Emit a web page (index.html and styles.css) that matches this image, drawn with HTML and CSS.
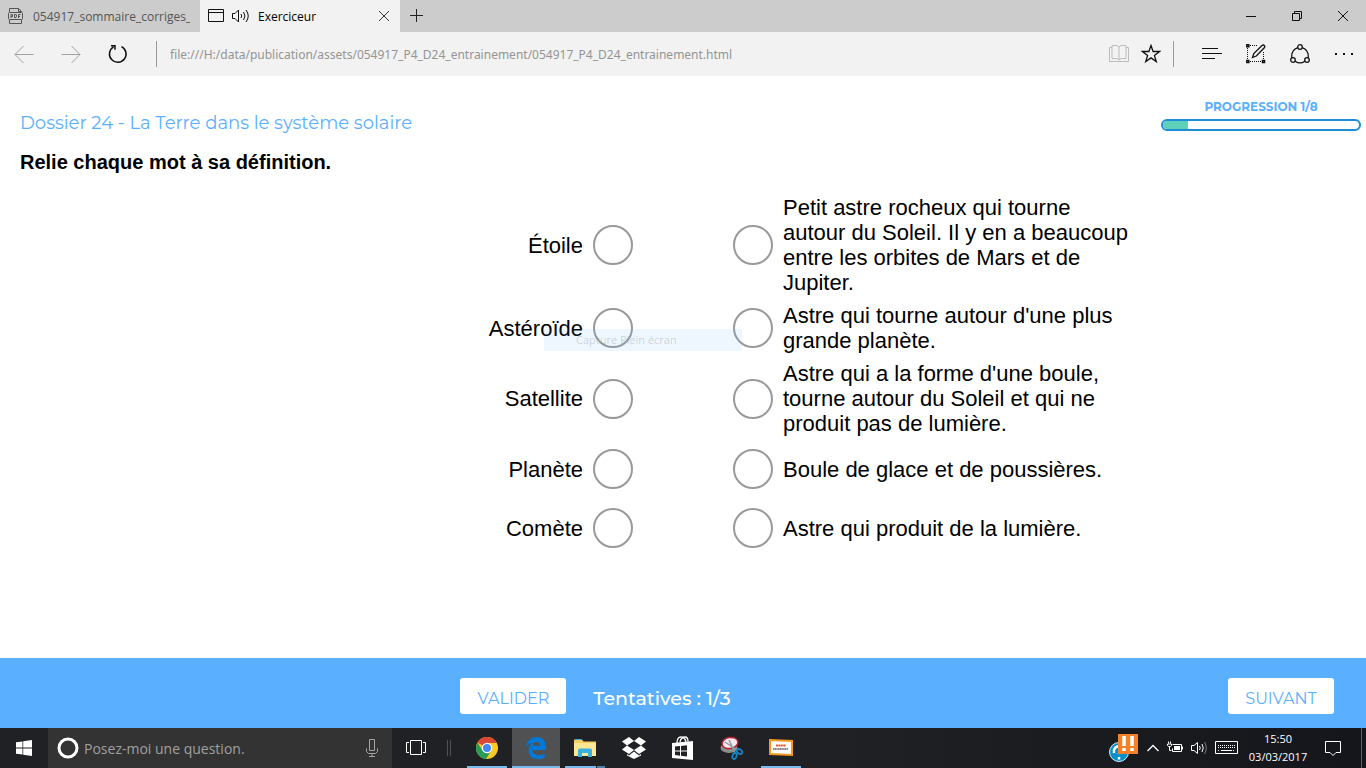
FILE: index.html
```html
<!DOCTYPE html>
<html lang="fr">
<head>
  <meta charset="UTF-8" />
  <meta name="viewport" content="width=device-width, initial-scale=1" />
  <title>Exerciceur</title>
  <link rel="stylesheet" href="styles.css">
</head>
<body>
  <header class="browser">
    <div class="tabs">
      <button class="tab">
        <svg width="16" height="18" viewBox="0 0 16 18" fill="none" stroke="#555"><path d="M1.500 5V1.500h9l3 3V5M10.500 1.500v3h3M1.500 13v3.500h12V13"/><rect x=".5" y="5.500" width="14" height="7" rx="1"/><path d="M3 11V7.500h1.500v2H3M6.500 7.500v3H8l.5-1V8L8 7.500H6.500M10.500 11V7.500h2M10.500 9.500H12"/></svg>
        <span class="tab-title">054917_sommaire_corriges_</span>
      </button>
      <div class="tab active">
        <svg width="16" height="14" viewBox="0 0 16 14" fill="none" stroke="#111"><path d="M.5.5h15v12H.5zM.5 3.500h15"/></svg>
        <svg class="sound" width="17" height="14" viewBox="0 0 17 14" fill="none" stroke="#111"><path d="M.5 4.500h2.500L6.500 1v12L3 9.500H.5zM9 5q1.500 2 0 4M11.500 3q3 4 0 8M14 1q4.500 6 0 12"/></svg>
        <span class="tab-title">Exerciceur</span>
        <button class="close" aria-label="Fermer l'onglet"><svg width="12" height="12" viewBox="0 0 12 12" stroke="#333"><path d="M1 1l10 10M11 1L1 11"/></svg></button>
      </div>
      <button class="new-tab" aria-label="Nouvel onglet"><svg width="14" height="14" viewBox="0 0 14 14" stroke="#222"><path d="M6.500 0v13M0 6.500h13"/></svg></button>
      <div class="window-buttons">
        <button aria-label="Réduire"><svg width="12" height="12" viewBox="0 0 12 12" stroke="#111"><path d="M1 6.500h10"/></svg></button>
        <button aria-label="Restaurer"><svg width="12" height="12" viewBox="0 0 12 12" fill="none" stroke="#111"><path d="M1.500 3.500h7v7h-7zM3.500 3.500v-2h7v7h-2"/></svg></button>
        <button aria-label="Fermer"><svg width="12" height="12" viewBox="0 0 12 12" stroke="#111"><path d="M1 1l10 10M11 1L1 11"/></svg></button>
      </div>
    </div>

    <div class="toolbar">
      <button aria-label="Précédent"><svg width="20" height="18" viewBox="0 0 20 18" fill="none" stroke="#a0a0a0"><path d="M19.500 9.500H1M9.500 1L1 9.500 9.500 18"/></svg></button>
      <button aria-label="Suivant"><svg width="20" height="18" viewBox="0 0 20 18" fill="none" stroke="#a0a0a0"><path d="M.5 9.500H19M10.500 1L19 9.500 10.500 18"/></svg></button>
      <button aria-label="Actualiser"><svg width="20" height="20" viewBox="0 0 20 20" fill="none" stroke="#111" stroke-width="1.500"><path d="M13.500 2.600a8.300 8.300 0 1 1-8 .3M3 1.700h4v4"/></svg></button>
      <input class="address" type="text" aria-label="Adresse" value="file:///H:/data/publication/assets/054917_P4_D24_entrainement/054917_P4_D24_entrainement.html">
      <div class="page-tools">
        <button aria-label="Mode lecture"><svg width="20" height="20" viewBox="0 0 20 20" fill="none" stroke="#bcbcbc"><path d="M3 1.500h5l2 1.500 2-1.500h5v13h-5l-2 1.500-2-1.500H3zM10 3v13M3 3.500H.5v14h19v-14H17M8 17.500h4"/></svg></button>
        <button aria-label="Favoris"><svg width="20" height="20" viewBox="0 0 20 20" fill="none" stroke="#111" stroke-width="1.300"><path d="M10 1.500l2.100 6h6.400l-5.100 3.900 1.900 6.200-5.300-3.700-5.300 3.700 1.900-6.200L1.500 7.500h6.400z"/></svg></button>
      </div>
      <div class="hub-tools">
        <button aria-label="Hub"><svg width="20" height="20" viewBox="0 0 20 20" stroke="#111"><path d="M0 4.500h16M0 9.500h20M0 14.500h13"/></svg></button>
        <button aria-label="Créer une note web"><svg width="20" height="20" viewBox="0 0 20 20" fill="none" stroke="#111"><path d="M4 1.500h8M1.500 4v12M4 17.500h12M17.500 8v8" stroke-dasharray="1 1"/><path d="M.8.800h2v2h-2zM.8 16.500h2v2h-2zM16.500 16.500h2v2h-2z" stroke-width="1.500"/><path d="M6.500 13.500l1.300-4 8.200-8q1.300-1 2.300 0t0 2.300L10.300 12z" stroke-width="1.300"/></svg></button>
        <button aria-label="Partager"><svg width="20" height="20" viewBox="0 0 20 20" fill="none" stroke="#111" stroke-width="1.300"><circle cx="10" cy="3" r="2.300"/><circle cx="3" cy="16" r="2.300"/><circle cx="17" cy="16" r="2.300"/><path d="M7.700 3.600Q1 6 1.800 13.800M12.300 3.600Q19 6 18.200 13.800M5.200 17.200q4.800 3.500 9.600 0"/></svg></button>
        <button aria-label="Autres actions"><svg width="20" height="20" viewBox="0 0 20 20" fill="#111"><path d="M1 9h2v2H1zM9 9h2v2H9zM17 9h2v2h-2z"/></svg></button>
      </div>
    </div>
  </header>

  <main class="exercise">
    <div class="heading">
      <div>
        <h1>Dossier 24 - La Terre dans le système solaire</h1>
        <p class="instruction">Relie chaque mot à sa définition.</p>
      </div>
      <div class="progress">
        <span id="progress-label">PROGRESSION 1/8</span>
        <div class="bar" role="progressbar" aria-labelledby="progress-label" aria-valuenow="1" aria-valuemin="0" aria-valuemax="8"><div class="fill" style="width: 12.5%"></div></div>
      </div>
    </div>

    <ul class="pairs">
      <li>
        <span class="term">Étoile</span>
        <button class="dot" aria-label="Relier Étoile"></button>
        <button class="dot" aria-label="Relier la définition 1"></button>
        <span class="definition">Petit astre rocheux qui tourne autour du Soleil. Il y en a beaucoup entre les orbites de Mars et de Jupiter.</span>
      </li>
      <li>
        <span class="term">Astéroïde</span>
        <button class="dot" aria-label="Relier Astéroïde"></button>
        <button class="dot" aria-label="Relier la définition 2"></button>
        <span class="definition">Astre qui tourne autour d'une plus grande planète.</span>
      </li>
      <li>
        <span class="term">Satellite</span>
        <button class="dot" aria-label="Relier Satellite"></button>
        <button class="dot" aria-label="Relier la définition 3"></button>
        <span class="definition">Astre qui a la forme d'une boule, tourne autour du Soleil et qui ne produit pas de lumière.</span>
      </li>
      <li>
        <span class="term">Planète</span>
        <button class="dot" aria-label="Relier Planète"></button>
        <button class="dot" aria-label="Relier la définition 4"></button>
        <span class="definition">Boule de glace et de poussières.</span>
      </li>
      <li>
        <span class="term">Comète</span>
        <button class="dot" aria-label="Relier Comète"></button>
        <button class="dot" aria-label="Relier la définition 5"></button>
        <span class="definition">Astre qui produit de la lumière.</span>
      </li>
    </ul>
    <div class="capture">Capture Plein écran</div>
  </main>

  <footer class="actions">
    <div class="attempt">
      <button class="action">VALIDER</button>
      <span class="count">Tentatives : 1/3</span>
    </div>
    <button class="action next">SUIVANT</button>
  </footer>

  <nav class="taskbar">
    <button class="task" aria-label="Démarrer"><svg width="16" height="16" viewBox="0 0 16 16" fill="#fff"><path d="M0 2.300l6.500-.9v6.200H0zM7.200 1.300L16 0v7.600H7.200zM0 8.400h6.500v6.200L0 13.700zM7.200 8.400H16V16l-8.800-1.300z"/></svg></button>
    <div class="search">
      <svg width="22" height="22" viewBox="0 0 22 22" fill="none"><circle cx="11" cy="11" r="9" stroke="#fff" stroke-width="3"/></svg>
      <input type="text" aria-label="Recherche" placeholder="Posez-moi une question.">
      <svg width="12" height="18" viewBox="0 0 12 18" fill="none" stroke="#a5a5a5"><path d="M3.500.5h5v11h-5zM.5 9.500v3l2 2h7l2-2v-3M6 14.500v3M3 17.500h6"/></svg>
    </div>
    <button class="task" aria-label="Affichage des tâches"><svg width="20" height="16" viewBox="0 0 20 16" fill="none" stroke="#fff"><path d="M4.500.5h11v14h-11zM3 2.500H.5v10H3M17 2.500h2.500v10H17"/></svg></button>
    <div class="handle"></div>
    <div class="apps">
      <button class="task open" aria-label="Chrome"><svg width="22" height="22" viewBox="0 0 22 22"><circle cx="11" cy="11" r="11" fill="#f9c926"/><path d="M11 11L1.500 5.500A11 11 0 0 1 20.700 6H11z" fill="#dc4636"/><path d="M1.500 5.500A11 11 0 0 0 10 22l5.300-8.500L11 11 6.500 13.500z" fill="#269c57"/><circle cx="11" cy="11" r="5.200" fill="#fff"/><circle cx="11" cy="11" r="4" fill="#4387f4"/></svg></button>
      <button class="task open current" aria-label="Edge"><svg width="20" height="22" viewBox="0 0 20 22"><path fill="#0078d7" d="M0 10C.8 4.500 4.500 0 10.500 0 16.500 0 20 4.200 20 9.500V13H6.500c.2 4 3.200 5.200 6 5.200 2.500 0 4.700-.7 6.200-1.700v4C16.700 21.500 14.500 22 12 22c-6 0-9.500-3.500-9.500-8.500 0-3.500 1.700-6.200 4.800-7.800C4.500 6 1.800 7.600 0 10zm6.700-1.200h7.200C14 6.300 12.700 4.700 10.500 4.700S7 6.500 6.700 8.800z"/></svg></button>
      <button class="task open many" aria-label="Explorateur de fichiers"><svg width="22" height="20" viewBox="0 0 22 20"><path d="M0 1.500h8l1.500 2H22V18H0z" fill="#f5ce62"/><path d="M0 5h22v13H0z" fill="#ffe694"/><path d="M2 1h5v1H2z" fill="#3db4e7"/><path d="M4 12.500q0-2 2-2h10q2 0 2 2V19h-4v-4H8v4H4z" fill="#38b1e2"/></svg></button>
      <button class="task" aria-label="Dropbox"><svg width="24" height="22" viewBox="0 0 24 22" fill="#fff"><path d="M7 0l5 4-7 4.500L0 4.500zM17 0l7 4.500-5 4L12 4zM5 8.500l7 4.500-5 4-7-4.500zM19 8.500l5 4-7 4.500-5-4zM5 17l2 1.500 5-4 5 4 2-1.500v1.500L12 22l-7-3.500z"/></svg></button>
      <button class="task" aria-label="Store"><svg width="22" height="24" viewBox="0 0 22 24"><path d="M0 7l21-2v19L0 22z" fill="#fff"/><path d="M5 7Q5 1 9 1t5 5M8 6q1-5 5-5 3 0 3 4.500" fill="none" stroke="#fff" stroke-width="1.300"/><path d="M3 10.500l5-.5v4.500H3zM9 9.900l6-.6v5.200H9zM3 15.500h5v4.200L3 19zM9 15.500h6v5l-6-.7z" fill="#202124"/></svg></button>
      <button class="task" aria-label="Outil Capture"><svg width="24" height="24" viewBox="0 0 24 24"><ellipse cx="9" cy="12" rx="8.500" ry="5" fill="#8c8c8c"/><ellipse cx="10" cy="7" rx="8" ry="5.500" fill="#f4e9ec" stroke="#bc2036" stroke-width="1.500" transform="rotate(-10 10 7)"/><path d="M9 4l6 13M5 6l12 8" stroke="#8d9aa3" stroke-width="1.500"/><g fill="none" stroke="#1686c4" stroke-width="1.800"><ellipse cx="19.500" cy="15.500" rx="3" ry="2" transform="rotate(35 19.500 15.500)"/><ellipse cx="14.500" cy="20" rx="2" ry="3" transform="rotate(20 14.500 20)"/></g></svg></button>
      <button class="task open" aria-label="Manuel numérique"><svg width="24" height="18" viewBox="0 0 24 18"><path d="M1 1l22 1v14L1 15z" fill="#fff" stroke="#f49a1a" stroke-width="2"/><path d="M7 6.500h10" stroke="#e65b25" stroke-width="2" stroke-dasharray="2 .4"/><path d="M4 10h15" stroke="#555" stroke-width="1.300" stroke-dasharray="1.300 .4"/></svg></button>
    </div>
    <div class="tray">
      <svg width="30" height="30" viewBox="0 0 30 30"><circle cx="10" cy="19" r="9.500" fill="#078fc9" stroke="#d8eef8"/><path d="M5 20q-1-6 5-7M10 24v2.500M10 20v1" stroke="#fff" stroke-width="2.500" fill="none"/><path d="M9 1h20v20H9z" fill="#f58025"/><path d="M15 3v10M23 3v10M15 15v3M23 15v3" stroke="#fff" stroke-width="3.500"/></svg>
      <svg width="12" height="16" viewBox="0 0 12 16" fill="none" stroke="#fff" stroke-width="1.300"><path d="M.5 11L6 5.500l5.500 5.500"/></svg>
      <svg width="16" height="16" viewBox="0 0 16 16" fill="none" stroke="#fff"><path d="M5.500 4.500h9v7h-9v-3M15.500 6.500v3M1.500 1.500v2M3.500 1.500v2M.5 4h4v1.500l-1 1h-2l-1-1zM2.500 7v3.500h2"/><path d="M7 6h6v4H7z" fill="#fff" stroke="none"/></svg>
      <svg width="16" height="16" viewBox="0 0 16 16" fill="none" stroke="#fff"><path d="M.5 5.500H3l3.500-3v11l-3.500-3H.5zM8.500 6q1.500 2 0 4M11 4q2.500 4 0 8"/><path d="M13.500 2q3.500 6 0 12" stroke="#777"/></svg>
      <svg width="23" height="14" viewBox="0 0 23 14" fill="none" stroke="#fff"><path d="M.5.500h22v12H.5zM6 9.500h11"/><path d="M3 4.500h17M3 6.500h17M3 9.500h2M18 9.500h2" stroke-dasharray="1 1"/></svg>
      <time class="clock" datetime="2017-03-03T15:50">15:50<br>03/03/2017</time>
      <svg width="16" height="16" viewBox="0 0 16 16" fill="none" stroke="#fff"><path d="M.5 1.500h15v11H11L8 15.500l-3-3H.5z"/></svg>
    </div>
  </nav>
</body>
</html>
```
FILE: styles.css
```css
* {
  box-sizing: border-box;
}
body {
  margin: 0;
  min-height: 100vh;
  display: flex;
  flex-direction: column;
  background: #fff;
  color: #000;
  font-family: "Liberation Sans", Arial, sans-serif;
}
button {
  padding: 0;
  border: none;
  background: none;
  color: inherit;
  font: inherit;
  cursor: pointer;
}
svg {
  display: block;
  flex: none;
}

/* browser */
.browser {
  font-family: "Open Sans", sans-serif;
  font-size: 12px;
}
.tabs {
  display: flex;
  height: 32px;
  background: #ccc;
}
.tab {
  display: flex;
  align-items: center;
  width: 200px;
  padding: 0 10px 0 8px;
  color: #555;
}
.tab-title {
  flex: 1;
  margin-left: 9px;
  overflow: hidden;
  white-space: nowrap;
  text-align: left;
}
.tab.active {
  background: #f2f2f2;
  color: #000;
}
.sound {
  margin-left: 8px;
}
.new-tab {
  display: flex;
  align-items: center;
  justify-content: center;
  width: 34px;
}
.window-buttons {
  display: flex;
  margin-left: auto;
}
.window-buttons button {
  display: grid;
  place-items: center;
  width: 46px;
}
.toolbar {
  display: flex;
  align-items: center;
  height: 44px;
  background: #f2f2f2;
}
.toolbar > button {
  display: grid;
  place-items: center;
  width: 47px;
}
.address {
  flex: 1;
  min-width: 0;
  height: 26px;
  margin-left: 15px;
  padding: 0 0 0 13px;
  border: none;
  border-left: 1px solid #999;
  background: none;
  color: #949494;
  font-family: "Noto Sans", sans-serif;
  font-size: 12px;
}
.page-tools,
.hub-tools {
  display: flex;
  align-items: center;
  height: 26px;
}
.page-tools {
  gap: 12px;
  padding-right: 12px;
  border-right: 1px solid #999;
}
.hub-tools {
  gap: 24px;
  padding: 0 12px 0 28px;
}

/* exercise */
.exercise {
  position: relative;
  flex: 1;
  padding: 24px 5px 20px 20px;
}
.heading {
  display: flex;
  justify-content: space-between;
}
h1 {
  margin: 0;
  padding-top: 11px;
  color: #5aafff;
  font-family: Montserrat, Inter, sans-serif;
  font-size: 18px;
  font-weight: 400;
  line-height: 24px;
}
.instruction {
  margin: 15px 0 0;
  font-size: 20px;
  font-weight: bold;
  line-height: 24px;
}
.progress {
  display: flex;
  flex-direction: column;
  align-items: center;
  gap: 5px;
  width: 200px;
  color: #5aafff;
  font-family: Montserrat, Inter, sans-serif;
  font-size: 12px;
  font-weight: 700;
  line-height: 14px;
}
.bar {
  width: 100%;
  height: 12px;
  border: 2px solid #1d8dda;
  border-radius: 6px;
  overflow: hidden;
}
.fill {
  height: 100%;
  background: #5fd0b9;
}
.pairs {
  display: flex;
  flex-direction: column;
  gap: 7px;
  margin: 21px 0 0;
  padding: 0 15px 0 0;
  list-style: none;
  font-size: 22px;
  line-height: 25px;
}
.pairs li {
  display: flex;
  align-items: center;
  justify-content: center;
  gap: 10px;
  min-height: 52px;
}
.term,
.definition {
  width: 350px;
}
.term {
  text-align: right;
}
.dot {
  flex: none;
  width: 40px;
  height: 40px;
  border: 2px solid #999;
  border-radius: 50%;
}
.dot + .dot {
  margin-left: 90px;
}
.capture {
  position: absolute;
  top: 253px;
  left: calc(50% - 139px);
  width: 198px;
  padding-left: 32px;
  background: rgba(90, 175, 255, 0.1);
  color: rgba(120, 120, 120, 0.3);
  font-family: "Open Sans", sans-serif;
  font-size: 11px;
  line-height: 22px;
  pointer-events: none;
}

/* footer */
.actions {
  display: grid;
  grid-template-columns: repeat(3, 1fr);
  align-items: center;
  height: 70px;
  padding-top: 6px;
  background: #5aafff;
  color: #fff;
  font-family: Montserrat, Inter, sans-serif;
}
.attempt {
  grid-column: 2;
  display: flex;
  align-items: center;
  gap: 27px;
  padding-left: 5px;
  white-space: nowrap;
}
.count {
  padding-top: 4px;
  font-size: 19px;
  font-weight: 500;
}
.action {
  width: 106px;
  height: 36px;
  padding-top: 4px;
  border-radius: 3px;
  background: #fff;
  color: #5aafff;
  font-size: 16px;
}
.next {
  justify-self: end;
  margin-right: 32px;
}

/* taskbar */
.taskbar {
  display: flex;
  height: 40px;
  background: linear-gradient(90deg, #202124 60%, #14161b);
  color: #fff;
  font-family: "Open Sans", sans-serif;
}
.task {
  display: grid;
  place-items: center;
  width: 48px;
  height: 40px;
}
.search {
  display: flex;
  align-items: center;
  width: 344px;
  padding: 0 14px 0 9px;
  background: #333;
}
.search input {
  flex: 1;
  min-width: 0;
  padding: 0 0 0 5px;
  border: none;
  background: none;
  color: #fff;
  font: inherit;
  font-size: 14px;
}
.search input::placeholder {
  color: #a0a0a0;
}
.handle {
  width: 4px;
  height: 16px;
  margin: 12px 12px 0 7px;
  border: 1px solid #505254;
  border-width: 0 1px;
}
.apps {
  display: flex;
  gap: 1px;
}
.open {
  background: linear-gradient(#76b9ed, #76b9ed) center bottom / 40px 2px no-repeat;
}
.current {
  background-color: #505152;
  background-size: 48px 2px;
}
.many {
  background-image: linear-gradient(90deg, #76b9ed 31px, #202124 31px, #202124 32px, #4f80a8 32px);
}
.tray {
  display: flex;
  align-items: center;
  gap: 8px;
  margin-left: auto;
  margin-right: 4px;
  padding-right: 20px;
  border-right: 1px solid #606266;
}
.clock {
  width: 64px;
  margin-right: 7px;
  font-size: 11px;
  line-height: 18px;
  text-align: center;
  white-space: nowrap;
}
```
